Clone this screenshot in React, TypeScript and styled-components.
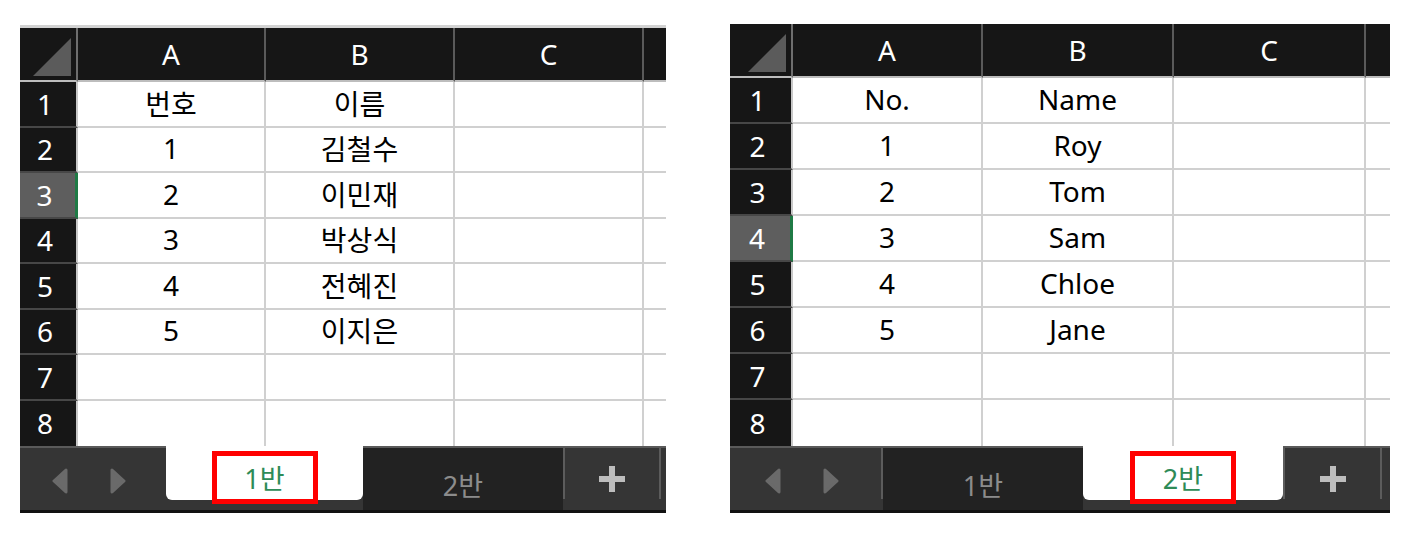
import styled, { createGlobalStyle } from 'styled-components'

type SheetData = {
    key: string
    cols: number[]
    rowHeight: number
    topRule: boolean
    selectedRow: number
    header: [string, string]
    people: string[]
    navWidth: number
    tabWidths: number[]
    plusWidth: number
    activeTab: number
}

const sheets: SheetData[] = [
    {
        key: 'ko',
        cols: [58, 188, 189, 189, 22],
        rowHeight: 45.5,
        topRule: true,
        selectedRow: 3,
        header: ['번호', '이름'],
        people: ['김철수', '이민재', '박상식', '전혜진', '이지은'],
        navWidth: 146,
        tabWidths: [197, 200],
        plusWidth: 94,
        activeTab: 0,
    },
    {
        key: 'en',
        cols: [63, 190, 191, 192, 24],
        rowHeight: 46,
        topRule: false,
        selectedRow: 4,
        header: ['No.', 'Name'],
        people: ['Roy', 'Tom', 'Sam', 'Chloe', 'Jane'],
        navWidth: 151,
        tabWidths: [200, 200],
        plusWidth: 95,
        activeTab: 1,
    },
]

const LETTERS = ['A', 'B', 'C', '']
const ROWS = [1, 2, 3, 4, 5, 6, 7, 8]
const TAB_NAMES = ['1반', '2반']

function cellValue(sheet: SheetData, row: number, col: number) {
    if (row === 1) return col < 2 ? sheet.header[col] : ''
    if (col === 0) return row - 1 <= sheet.people.length ? String(row - 1) : ''
    if (col === 1) return sheet.people[row - 2] ?? ''
    return ''
}

function Sheet({ sheet }: { sheet: SheetData }) {
    const firstTabActive = sheet.activeTab === 0

    return (
        <Panel $topRule={sheet.topRule} $width={sheet.cols.reduce((a, b) => a + b, 0)}>
            <Grid $cols={sheet.cols} $rowHeight={sheet.rowHeight}>
                <Corner>
                    <svg width="38" height="38" viewBox="0 0 38 38">
                        <path d="M0 38 L38 38 L38 0 Z" fill="#5b5b5b" />
                    </svg>
                </Corner>
                {LETTERS.map((letter, i) => (
                    <ColHead key={i} $last={i === LETTERS.length - 1}>
                        {letter}
                    </ColHead>
                ))}
                {ROWS.map((row) => (
                    <Row key={row} sheet={sheet} row={row} />
                ))}
            </Grid>
            <TabBar>
                <Nav $w={sheet.navWidth}>
                    <svg width="18" height="26" viewBox="0 0 18 26">
                        <path d="M15 2 L15 24 L3 13 Z" fill="#6a6a6a" stroke="#6a6a6a" strokeWidth="3" strokeLinejoin="round" />
                    </svg>
                    <svg width="18" height="26" viewBox="0 0 18 26">
                        <path d="M3 2 L3 24 L15 13 Z" fill="#6a6a6a" stroke="#6a6a6a" strokeWidth="3" strokeLinejoin="round" />
                    </svg>
                </Nav>
                {!firstTabActive && <Divider />}
                {TAB_NAMES.map((name, i) => (
                    <Tab key={name} $active={i === sheet.activeTab} $w={sheet.tabWidths[i]}>
                        <TabLabel $active={i === sheet.activeTab}>{name}</TabLabel>
                        {i === sheet.activeTab && <Highlight />}
                    </Tab>
                ))}
                <Divider />
                <PlusArea $w={sheet.plusWidth}>
                    <svg width="26" height="26" viewBox="0 0 26 26">
                        <rect x="0" y="10" width="26" height="6" fill="#bdbdbd" />
                        <rect x="10" y="0" width="6" height="26" fill="#bdbdbd" />
                    </svg>
                </PlusArea>
                <Divider />
                <Tail />
            </TabBar>
        </Panel>
    )
}

function Row({ sheet, row }: { sheet: SheetData; row: number }) {
    const lastRow = row === ROWS.length
    return (
        <>
            <RowHead $selected={row === sheet.selectedRow} $lastRow={lastRow}>
                {row}
            </RowHead>
            {LETTERS.map((_, col) => (
                <Cell key={col} $lastCol={col === LETTERS.length - 1} $lastRow={lastRow}>
                    {cellValue(sheet, row, col)}
                </Cell>
            ))}
        </>
    )
}

export default function App() {
    return (
        <>
            <GlobalStyle />
            <Page>
                {sheets.map((sheet) => (
                    <Sheet key={sheet.key} sheet={sheet} />
                ))}
            </Page>
        </>
    )
}

const GlobalStyle = createGlobalStyle`
    * {
        box-sizing: border-box;
    }
    body {
        margin: 0;
        background: #ffffff;
        font-family: 'Noto Sans', 'Noto Sans CJK KR', sans-serif;
    }
`

const Page = styled.div`
    display: flex;
    align-items: flex-start;
    gap: 64px;
    padding: 24px 0 0 20px;
`

const Panel = styled.section<{ $topRule: boolean; $width: number }>`
    width: ${(p) => p.$width}px;
    margin-top: ${(p) => (p.$topRule ? '1px' : '0')};
    border-top: ${(p) => (p.$topRule ? '3px solid #d2d2d2' : 'none')};
`

const Grid = styled.div<{ $cols: number[]; $rowHeight: number }>`
    display: grid;
    grid-template-columns: ${(p) => p.$cols.map((c) => `${c}px`).join(' ')};
    grid-template-rows: 54px repeat(8, ${(p) => p.$rowHeight}px);
    font-size: 28px;
`

const Corner = styled.div`
    display: flex;
    justify-content: flex-end;
    align-items: flex-end;
    padding: 0 5px 4px 0;
    background: #161616;
    border-right: 2px solid #6e6e6e;
    border-bottom: 2px solid #bdbdbd;
`

const ColHead = styled.div<{ $last: boolean }>`
    display: flex;
    align-items: center;
    justify-content: center;
    background: #161616;
    color: #ffffff;
    border-right: ${(p) => (p.$last ? 'none' : '2px solid #5a5a5a')};
    border-bottom: 2px solid #bdbdbd;
`

const RowHead = styled.div<{ $selected: boolean; $lastRow: boolean }>`
    display: flex;
    align-items: center;
    justify-content: center;
    padding-right: 6px;
    background: ${(p) => (p.$selected ? '#5e5e5e' : '#161616')};
    color: #ffffff;
    border-right: ${(p) => (p.$selected ? '3px solid #1f7a45' : '2px solid #c8c8c8')};
    border-bottom: ${(p) => (p.$lastRow ? 'none' : '2px solid #474747')};
`

const Cell = styled.div<{ $lastCol: boolean; $lastRow: boolean }>`
    display: flex;
    align-items: center;
    justify-content: center;
    padding-bottom: 2px;
    background: #ffffff;
    color: #000000;
    white-space: nowrap;
    overflow: hidden;
    border-right: ${(p) => (p.$lastCol ? 'none' : '2px solid #d0d0d0')};
    border-bottom: ${(p) => (p.$lastRow ? 'none' : '2px solid #d0d0d0')};
`

const TabBar = styled.div`
    display: flex;
    height: 67px;
    background: #353535;
    border-top: 2px solid #5a5a5a;
    border-bottom: 3px solid #121212;
    box-shadow: 0 2px 0 #4a4a4a;
`

const Nav = styled.div<{ $w: number }>`
    display: flex;
    align-items: center;
    justify-content: center;
    gap: 40px;
    width: ${(p) => p.$w}px;
    padding: 3px 8px 0 0;
    flex-shrink: 0;
`

const Divider = styled.div`
    width: 2px;
    height: 51px;
    flex-shrink: 0;
    background: #5c5c5c;
`

const Tab = styled.div<{ $active: boolean; $w: number }>`
    position: relative;
    display: flex;
    align-items: center;
    justify-content: center;
    flex-shrink: 0;
    width: ${(p) => p.$w}px;
    align-self: flex-start;
    margin-top: ${(p) => (p.$active ? '-2px' : '0')};
    height: ${(p) => (p.$active ? '54px' : '62px')};
    padding-top: ${(p) => (p.$active ? '8px' : '10px')};
    background: ${(p) => (p.$active ? '#ffffff' : '#222222')};
    border-radius: ${(p) => (p.$active ? '0 0 6px 6px' : '0')};
`

const TabLabel = styled.span<{ $active: boolean }>`
    font-size: 27px;
    color: ${(p) => (p.$active ? '#2e8b57' : '#8c8c8c')};
`

const Highlight = styled.div`
    position: absolute;
    top: 5px;
    left: 50%;
    width: 106px;
    height: 53px;
    transform: translateX(-50%);
    border: 5px solid #ff0000;
`

const PlusArea = styled.div<{ $w: number }>`
    display: flex;
    align-items: center;
    justify-content: center;
    width: ${(p) => p.$w}px;
    flex-shrink: 0;
`

const Tail = styled.div`
    flex: 1;
`
